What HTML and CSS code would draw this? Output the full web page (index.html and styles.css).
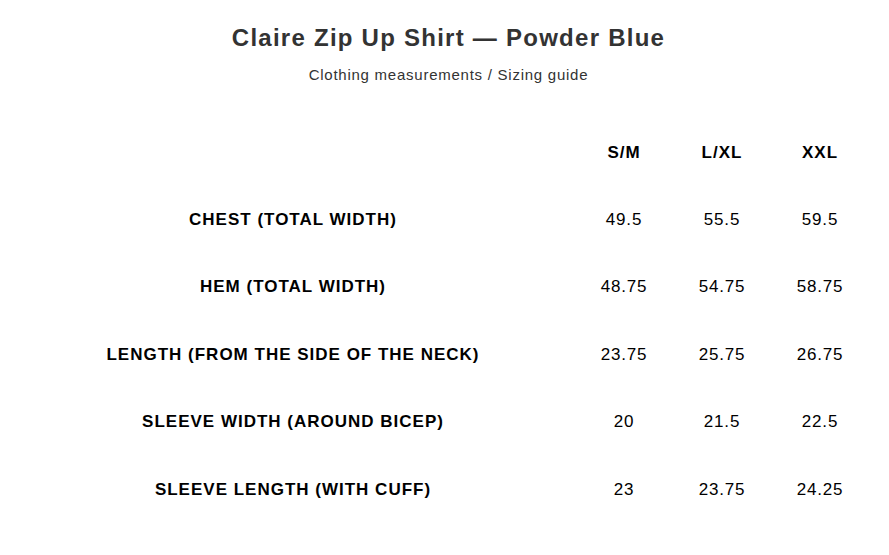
FILE: index.html
```html
<!DOCTYPE html>
<html lang="en">
<head>
<meta charset="utf-8">
<title>Claire Zip Up Shirt — Sizing guide</title>
<link rel="stylesheet" href="styles.css">
</head>
<body>
<div class="page">
  <header class="head">
    <h1 class="title">Claire Zip Up Shirt — Powder Blue</h1>
    <p class="subtitle">Clothing measurements / Sizing guide</p>
  </header>
  <div class="sizes">
    <div class="cell label"></div>
    <div class="cell size">S/M</div>
    <div class="cell size">L/XL</div>
    <div class="cell size">XXL</div>

    <div class="cell label">CHEST (TOTAL WIDTH)</div>
    <div class="cell val">49.5</div>
    <div class="cell val">55.5</div>
    <div class="cell val">59.5</div>

    <div class="cell label">HEM (TOTAL WIDTH)</div>
    <div class="cell val">48.75</div>
    <div class="cell val">54.75</div>
    <div class="cell val">58.75</div>

    <div class="cell label">LENGTH (FROM THE SIDE OF THE NECK)</div>
    <div class="cell val">23.75</div>
    <div class="cell val">25.75</div>
    <div class="cell val">26.75</div>

    <div class="cell label">SLEEVE WIDTH (AROUND BICEP)</div>
    <div class="cell val">20</div>
    <div class="cell val">21.5</div>
    <div class="cell val">22.5</div>

    <div class="cell label">SLEEVE LENGTH (WITH CUFF)</div>
    <div class="cell val">23</div>
    <div class="cell val">23.75</div>
    <div class="cell val">24.25</div>
  </div>
</div>
</body>
</html>
```

FILE: styles.css
```css
html, body {
  margin: 0;
  padding: 0;
  background: #ffffff;
}

body {
  font-family: "Liberation Sans", Arial, sans-serif;
  color: #000;
}

.page {
  width: 889px;
}

.head {
  padding: 24px 0 0 8px;
  text-align: center;
  color: #333333;
}

.title {
  margin: 0;
  font-size: 24px;
  line-height: 28px;
  font-weight: bold;
  letter-spacing: 1.25px;
}

.subtitle {
  margin: 14px 0 0;
  font-size: 15px;
  line-height: 18px;
  letter-spacing: 0.75px;
}

.sizes {
  margin: 35px 0 0 11px;
  display: grid;
  grid-template-columns: 564px repeat(3, 98px);
  grid-template-rows: 67px;
  grid-auto-rows: 67.5px;
}

.cell {
  display: flex;
  align-items: center;
  justify-content: center;
  text-align: center;
  font-size: 17px;
  line-height: 20px;
}

.label,
.size {
  font-weight: bold;
  letter-spacing: 1px;
}

.val {
  letter-spacing: 0.8px;
}
```
